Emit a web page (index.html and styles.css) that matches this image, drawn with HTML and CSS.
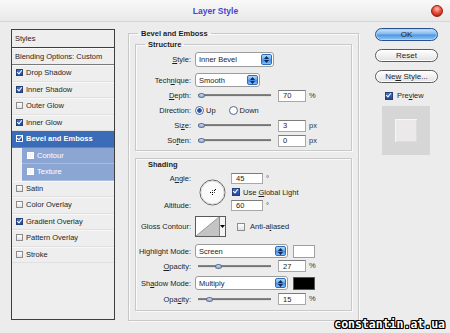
FILE: index.html
```html
<!DOCTYPE html>
<html lang="en">
<head>
    <meta charset="UTF-8">
    <title>Layer Style</title>
    <link rel="stylesheet" href="styles.css">
</head>
<body>
    <div class="dialog">
        <div class="titlebar">
            <div class="title">Layer Style</div>
            <div class="close"></div>
        </div>

        <div class="content">
            <!-- styles list -->
            <div class="styles-panel">
                <div class="styles-head">Styles</div>
                <div class="styles-blend">Blending Options: Custom</div>
                <ul class="styles-list">
                    <li><span class="cb on"></span>Drop Shadow</li>
                    <li><span class="cb on"></span>Inner Shadow</li>
                    <li><span class="cb"></span>Outer Glow</li>
                    <li><span class="cb on"></span>Inner Glow</li>
                    <li class="active"><span class="cb on"></span>Bevel and Emboss</li>
                    <li class="sub"><span class="cb"></span>Contour</li>
                    <li class="sub"><span class="cb"></span>Texture</li>
                    <li><span class="cb"></span>Satin</li>
                    <li><span class="cb"></span>Color Overlay</li>
                    <li><span class="cb on"></span>Gradient Overlay</li>
                    <li><span class="cb"></span>Pattern Overlay</li>
                    <li><span class="cb"></span>Stroke</li>
                </ul>
            </div>

            <!-- settings -->
            <fieldset class="group effect">
                <legend>Bevel and Emboss</legend>

                <fieldset class="group structure">
                    <legend>Structure</legend>
                    <div class="row row-style">
                        <span class="label"><span><u>S</u>tyle:</span></span>
                        <div class="select w-style"><span>Inner Bevel</span><i class="spin"><svg width="7" height="9" viewBox="0 0 7 9"><path d="M3.5 1 L6 4 L1 4 Z M1 5 L6 5 L3.5 8 Z" fill="#0a2a60"/></svg></i></div>
                    </div>
                    <div class="row row-tech">
                        <span class="label"><span>Tech<u>n</u>ique:</span></span>
                        <div class="select w-tech"><span>Smooth</span><i class="spin"><svg width="7" height="9" viewBox="0 0 7 9"><path d="M3.5 1 L6 4 L1 4 Z M1 5 L6 5 L3.5 8 Z" fill="#0a2a60"/></svg></i></div>
                    </div>
                    <div class="row">
                        <span class="label"><span><u>D</u>epth:</span></span>
                        <div class="slider"><i class="thumb" style="margin-left:0px"></i></div>
                        <div class="num">70</div><span class="unit">%</span>
                    </div>
                    <div class="row">
                        <span class="label"><span>Direction:</span></span>
                        <span class="radio on"></span><span class="opt">Up</span>
                        <span class="radio"></span><span class="opt">Down</span>
                    </div>
                    <div class="row">
                        <span class="label"><span>Si<u>z</u>e:</span></span>
                        <div class="slider"><i class="thumb" style="margin-left:0px"></i></div>
                        <div class="num">3</div><span class="unit">px</span>
                    </div>
                    <div class="row">
                        <span class="label"><span>So<u>f</u>ten:</span></span>
                        <div class="slider"><i class="thumb" style="margin-left:0px"></i></div>
                        <div class="num">0</div><span class="unit">px</span>
                    </div>
                </fieldset>

                <div class="group shading">
                    <div class="shading-title">Shading</div>

                    <div class="angle">
                        <span class="label a-label"><span>A<u>n</u>gle:</span></span>
                        <svg class="dial" width="27" height="27" viewBox="0 0 27 27">
                            <circle cx="13.5" cy="13.5" r="12.5" fill="#fafafa" stroke="#5f5f5f" stroke-width="1"/>
                            <circle cx="13.5" cy="13.5" r="11.5" fill="none" stroke="#d8d8d8" stroke-width="1"/>
                            <rect x="13" y="13" width="1" height="1" fill="#000"/>
                            <rect x="15" y="11" width="1" height="1" fill="#000"/>
                            <rect x="16" y="10" width="1" height="1" fill="#000"/>
                            <rect x="11" y="13" width="1" height="1" fill="#000"/>
                            <rect x="13" y="15" width="1" height="1" fill="#000"/>
                            <rect x="13" y="11" width="1" height="1" fill="#555"/>
                            <rect x="15" y="13" width="1" height="1" fill="#555"/>
                        </svg>
                        <div class="a-input"><div class="num">45</div><span class="unit">°</span></div>
                        <div class="a-global"><span class="cb on"></span><span>Use <u>G</u>lobal Light</span></div>
                        <span class="label b-label"><span>Altitude:</span></span>
                        <div class="b-input"><div class="num">60</div><span class="unit">°</span></div>
                    </div>

                    <div class="row row-gloss">
                        <span class="label"><span>Gloss Contour:</span></span>
                        <div class="contour">
                            <svg width="23" height="19" viewBox="0 0 23 19"><path d="M0 19 L23 0 L23 19 Z" fill="#c4c4c4"/><path d="M0 19 L23 0" stroke="#9a9a9a" stroke-width="1"/></svg>
                            <span class="contour-arrow"><svg width="5" height="3" viewBox="0 0 5 3"><path d="M0 0 L5 0 L2.5 3 Z" fill="#000"/></svg></span>
                        </div>
                        <span class="cb anti"></span><span class="opt">Anti-a<u>l</u>iased</span>
                    </div>
                    <div class="row row-mode">
                        <span class="label"><span>Highlight Mode:</span></span>
                        <div class="select w-mode"><span>Screen</span><i class="spin"><svg width="7" height="9" viewBox="0 0 7 9"><path d="M3.5 1 L6 4 L1 4 Z M1 5 L6 5 L3.5 8 Z" fill="#0a2a60"/></svg></i></div>
                        <span class="swatch white"></span>
                    </div>
                    <div class="row row-op">
                        <span class="label"><span><u>O</u>pacity:</span></span>
                        <div class="slider"><i class="thumb" style="margin-left:17px"></i></div>
                        <div class="num">27</div><span class="unit">%</span>
                    </div>
                    <div class="row row-mode2">
                        <span class="label"><span>Sh<u>a</u>dow Mode:</span></span>
                        <div class="select w-mode"><span>Multiply</span><i class="spin"><svg width="7" height="9" viewBox="0 0 7 9"><path d="M3.5 1 L6 4 L1 4 Z M1 5 L6 5 L3.5 8 Z" fill="#0a2a60"/></svg></i></div>
                        <span class="swatch black"></span>
                    </div>
                    <div class="row row-op2">
                        <span class="label"><span>Opa<u>c</u>ity:</span></span>
                        <div class="slider"><i class="thumb" style="margin-left:8px"></i></div>
                        <div class="num">15</div><span class="unit">%</span>
                    </div>
                </div>
            </fieldset>

            <!-- buttons -->
            <div class="actions">
                <div class="btn primary"><span>OK</span></div>
                <div class="btn"><span>Reset</span></div>
                <div class="btn"><span>Ne<u>w</u> Style...</span></div>
                <div class="preview-check"><span class="cb on"></span><span>Pre<u>v</u>iew</span></div>
                <div class="preview"><div class="preview-inner"></div></div>
            </div>
        </div>

        <div class="watermark">constantin.at.ua</div>
    </div>
</body>
</html>
```

FILE: styles.css
```css
:root {
    --bg: #ececec;
    --dark-line: #3e3e3e;
    --etch: #c8c8c8;
    --select-blue: #3b6cb7;
    --sub-blue: #8ca6d4;
}

* {
    margin: 0;
    padding: 0;
    box-sizing: border-box;
}

body {
    background: var(--bg);
    font-family: 'Liberation Sans', Arial, sans-serif;
    font-size: 7.5px;
    color: #1e1e1e;
}

u {
    text-decoration: underline;
}

.dialog {
    width: 450px;
    height: 333px;
    position: relative;
    overflow: hidden;
    background: var(--bg);
    display: flex;
    flex-direction: column;
}

/* title bar */
.titlebar {
    height: 22px;
    flex: none;
    display: flex;
    align-items: center;
    padding-right: 7px;
    background: linear-gradient(#f9f9f9, #e8e8e8);
    border-bottom: 1px solid #d6d6d6;
}

.title {
    flex: 1;
    text-align: center;
    color: #4646d0;
    font-size: 8.5px;
    font-weight: bold;
}

.close {
    width: 12px;
    height: 12px;
    border-radius: 50%;
    border: 1px solid #9a1f14;
    background: radial-gradient(circle at 50% 30%, #ffc2b8 0, #ee5a48 40%, #c3291a 75%, #8c140a 100%);
}

.content {
    flex: 1;
    display: flex;
    align-items: flex-start;
}

/* styles list */
.styles-panel {
    margin: 7px 0 0 11px;
    width: 104px;
    height: 291px;
    border: 1px solid var(--dark-line);
    background: #eeeeee;
    display: flex;
    flex-direction: column;
}

.styles-head {
    height: 18px;
    padding-left: 3px;
    display: flex;
    align-items: center;
    border-bottom: 1px solid var(--dark-line);
}

.styles-blend {
    height: 17px;
    padding-left: 3px;
    display: flex;
    align-items: center;
    border-top: 1px solid #fafafa;
    border-bottom: 1px solid #7a7a7a;
}

.styles-list {
    list-style: none;
}

.styles-list li {
    height: 16.5px;
    display: flex;
    align-items: center;
    padding-left: 4px;
    border-bottom: 1px solid #e0e0e0;
    box-shadow: inset 0 1px 0 #f8f8f8;
}

.styles-list li.active {
    background: var(--select-blue);
    color: #fff;
    font-weight: bold;
    box-shadow: none;
    border-bottom-color: #5d84c4;
}

.styles-list li.sub {
    margin-left: 10px;
    padding-left: 5px;
    background: var(--sub-blue);
    color: #fff;
    box-shadow: none;
    border-bottom-color: #a9bde0;
}

.cb {
    width: 7px;
    height: 7px;
    flex: none;
    margin-right: 3px;
    border: 1px solid #8c8c8c;
    background: linear-gradient(#ffffff, #e2e2e2);
    position: relative;
}

.cb.on {
    border-color: #22407a;
    background: linear-gradient(#4a74c0, #22479a);
}

.cb.on::after {
    content: '';
    position: absolute;
    left: 1px;
    top: -1px;
    width: 2px;
    height: 4px;
    border-right: 1px solid #fff;
    border-bottom: 1px solid #fff;
    transform: rotate(40deg);
}

.sub .cb {
    border-color: #fff;
    background: #f4f6fb;
}

.active .cb.on {
    border-color: #fff;
}

/* group boxes */
.group {
    border: 1px solid var(--etch);
    box-shadow: inset 1px 1px 0 #fafafa, 1px 1px 0 #fafafa;
}

.group legend,
.shading-title {
    font-weight: bold;
    line-height: 9px;
    padding: 0 3px;
    margin-left: 3px;
}

.effect {
    margin: 7px 0 0 13px;
    width: 231px;
    padding: 0 6px 9px;
    min-inline-size: 0;
}

.structure {
    margin-top: 2px;
    padding: 0 6px 3px;
    min-inline-size: 0;
}

.shading {
    margin-top: 7px;
    padding: 0 6px 5px;
}

.shading-title {
    padding-top: 1px;
    padding-left: 3px;
    margin-left: 3px;
}

/* form rows */
.row {
    display: flex;
    align-items: center;
    height: 13px;
    margin-top: 2px;
}

.row-style {
    height: 15px;
    margin-top: 3px;
}

.row-tech {
    height: 14px;
    margin-top: 6px;
}

.label {
    width: 53px;
    flex: none;
    display: flex;
    justify-content: flex-end;
    white-space: nowrap;
    padding-right: 4px;
}

.select {
    height: 100%;
    display: flex;
    align-items: center;
    justify-content: space-between;
    background: #fff;
    border: 1px solid #9c9c9c;
    border-radius: 3px;
    padding-left: 3px;
}

.w-style { width: 79px; }
.w-tech { width: 65px; }
.w-mode { width: 93px; }

.spin {
    width: 11px;
    height: calc(100% - 2px);
    margin-right: 1px;
    border: 1px solid #2f6cb8;
    border-radius: 2px;
    background: linear-gradient(#b3dcfd, #5aa2ec 50%, #3b86e0 51%, #86c0f6);
    display: flex;
    align-items: center;
    justify-content: center;
}

.spin svg {
    display: block;
}

.slider {
    width: 73px;
    height: 7px;
    margin-left: 3px;
    display: flex;
    align-items: center;
    background: linear-gradient(transparent 2px, #8a8a8a 2px, #6e6e6e 4px, #e0e0e0 4px, #e0e0e0 5px, transparent 5px);
    border-radius: 1px;
}

.thumb {
    width: 7px;
    height: 5px;
    border-radius: 50%;
    border: 1px solid #5d7393;
    background: linear-gradient(#d8e6f6, #8fa9cc);
}

.num {
    width: 28px;
    height: 12px;
    margin-left: 7px;
    padding-left: 4px;
    display: flex;
    align-items: center;
    background: #fff;
    border: 1px solid #a8a8a8;
    border-top-color: #7c7c7c;
    flex: none;
}

.unit {
    margin-left: 3px;
    color: #333;
    line-height: 1;
}

.radio {
    width: 9px;
    height: 9px;
    flex: none;
    border-radius: 50%;
    border: 1px solid #536b91;
    background: radial-gradient(circle, #fff 0, #fff 55%, #dfe4ec 100%);
}

.radio.on {
    background: radial-gradient(circle, #1d4aa2 0, #2a5cb6 2px, #fff 2.6px);
}

.opt {
    margin-left: 2px;
    margin-right: 13px;
}

/* angle block */
.angle {
    margin-top: 4px;
    display: grid;
    grid-template-columns: 53px 26px auto;
    grid-template-rows: 11px 16px 11px;
    column-gap: 5px;
    align-items: center;
}

.a-label { grid-column: 1; grid-row: 1; }
.b-label { grid-column: 1; grid-row: 3; }

.dial {
    grid-column: 2;
    grid-row: 1 / 4;
    margin-left: -1px;
    display: block;
}

.a-input,
.b-input {
    grid-column: 3;
    display: flex;
    align-items: center;
}

.a-input { grid-row: 1; }
.b-input { grid-row: 3; }

.a-input .num,
.b-input .num {
    width: 32px;
    margin-left: 0;
    height: 11px;
}

.a-global {
    grid-column: 3;
    grid-row: 2;
    display: flex;
    align-items: center;
    padding-left: 1px;
}

.a-global .cb {
    width: 8px;
    height: 8px;
}

.row-gloss {
    height: 21px;
    margin-top: 5px;
}

.contour {
    width: 31px;
    height: 21px;
    display: flex;
    border: 1px solid #5a5a5a;
    background: #fff;
}

.contour svg {
    display: block;
}

.contour-arrow {
    flex: 1;
    border-left: 1px solid #8a8a8a;
    background: #f4f4f4;
    display: flex;
    align-items: center;
    justify-content: center;
}

.cb.anti {
    margin-left: 11px;
    width: 8px;
    height: 8px;
}

.row-mode,
.row-mode2 {
    height: 14px;
    margin-top: 7px;
}

.row-mode2 {
    margin-top: 4px;
}

.row-op,
.row-op2 {
    height: 12px;
    margin-top: 2px;
}

.row-op2 {
    margin-top: 3px;
}

.swatch {
    width: 22px;
    height: 13px;
    margin-left: 5px;
    border: 1px solid #a0a0a0;
}

.swatch.white { background: #fff; }
.swatch.black { background: #000; border-color: #555; }

/* right column */
.actions {
    margin: 6px 0 0 16px;
    width: 63px;
    display: flex;
    flex-direction: column;
}

.btn {
    height: 13px;
    margin-bottom: 8px;
    border-radius: 7px;
    border: 1px solid #5a5a5a;
    background: linear-gradient(#ffffff, #f1f1f1 50%, #e2e2e2);
    box-shadow: inset 0 0 0 1px #fff;
    display: flex;
    align-items: center;
    justify-content: center;
    font-size: 8px;
}

.btn.primary {
    border-color: #28508c;
    background: linear-gradient(#cfe8fd, #7cb6ef 48%, #4f94e0 52%, #8fc6f7);
    box-shadow: inset 0 0 0 1px #a9d2f8;
}

.preview-check {
    margin: 0 0 0 10px;
    height: 9px;
    display: flex;
    align-items: center;
}

.preview-check .cb {
    width: 8px;
    height: 8px;
    margin-right: 4px;
}

.preview {
    margin: 6px 0 0 7px;
    width: 48px;
    height: 49px;
    background: #d6d6d6;
    display: flex;
    align-items: center;
    justify-content: center;
}

.preview-inner {
    width: 22px;
    height: 23px;
    background: #ebe9e9;
    box-shadow: inset 1px 1px 0 #f6f6f6, inset -1px -1px 0 #dedcdc;
}

/* watermark */
.watermark {
    position: absolute;
    right: 5px;
    bottom: 3px;
    font-family: 'DejaVu Sans Mono', 'Liberation Mono', monospace;
    font-weight: bold;
    font-size: 11.5px;
    line-height: 12px;
    color: #fff;
    text-shadow: 1px 0 0 #000, -1px 0 0 #000, 0 1px 0 #000, 0 -1px 0 #000,
                 1px 1px 0 #000, -1px -1px 0 #000, 1px -1px 0 #000, -1px 1px 0 #000;
}
```
